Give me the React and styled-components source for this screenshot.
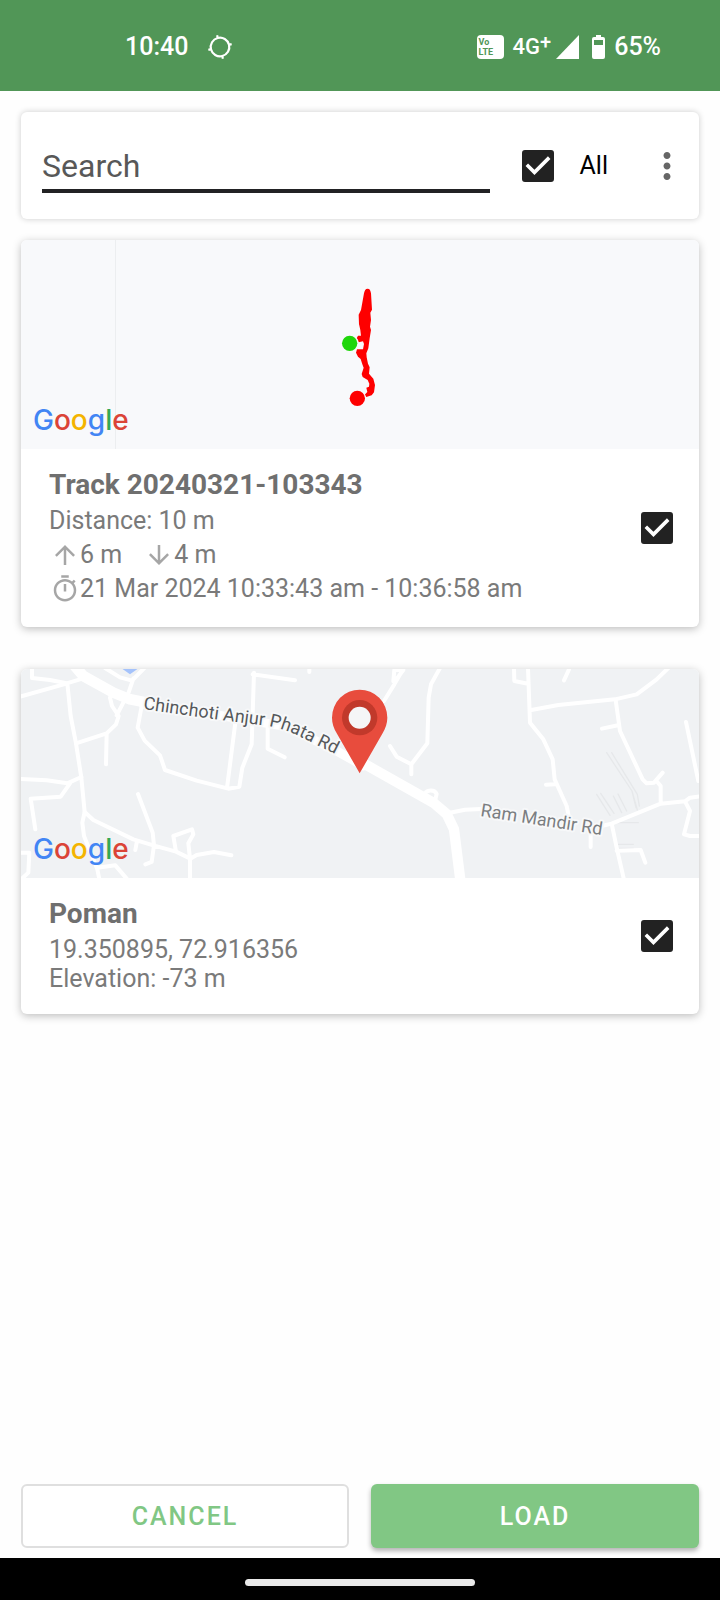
import React, { useState } from "react";
import styled, { createGlobalStyle } from "styled-components";

const GlobalStyle = createGlobalStyle`
  *, *::before, *::after { box-sizing: border-box; }
  body { margin: 0; background: #fefefe; font-family: Roboto, "Liberation Sans", sans-serif; }
`;

const Page = styled.div`
  min-height: 100vh;
  display: flex;
  flex-direction: column;
`;

const StatusBar = styled.header`
  height: 91px;
  padding: 2px 59px 0 125px;
  background: #519657;
  color: #fff;
  display: flex;
  align-items: center;
  justify-content: space-between;
  font-size: 25px;
  font-weight: 500;
  line-height: 30px;
`;

const StatusGroup = styled.div`
  display: flex;
  align-items: center;
  gap: ${(p) => p.$gap}px;
`;

const VolteBadge = styled.span`
  width: 27px;
  height: 24px;
  padding: 2px;
  border-radius: 4px;
  background: #fff;
  color: #519657;
  font-size: 9px;
  font-weight: 700;
  line-height: 10px;
`;

const Network = styled.span`
  display: flex;
  align-items: flex-start;
  font-size: 22px;
`;

const Plus = styled.span`
  font-size: 20px;
  line-height: 20px;
`;

const Content = styled.main`
  flex: 1;
  padding: 21px;
  display: flex;
  flex-direction: column;
  gap: 21px;
`;

const SearchCard = styled.form`
  height: 107px;
  padding: 0 11px 0 21px;
  display: flex;
  align-items: center;
  background: #fff;
  border-radius: 6px;
  box-shadow: 0 0 6px rgba(0, 0, 0, 0.2);
`;

const SearchInput = styled.input`
  flex: 1;
  min-width: 0;
  margin-right: 32px;
  padding: 9px 0 4px;
  height: 55px;
  border: 0;
  border-bottom: 4px solid #222224;
  outline: none;
  background: transparent;
  color: #222;
  font-family: inherit;
  font-size: 32px;
  line-height: 38px;
  &::placeholder { color: #585858; opacity: 1; }
`;

const AllLabel = styled.label`
  display: flex;
  align-items: center;
  gap: 26px;
  margin-right: 38px;
  color: #000;
  font-size: 25px;
  line-height: 30px;
`;

const MenuButton = styled.button`
  width: 42px;
  height: 42px;
  padding: 0;
  border: 0;
  background: transparent;
  color: #666;
  svg { display: block; }
`;

const CheckWrap = styled.span`
  display: grid;
  flex: none;
  width: 32px;
  height: 32px;
  svg { grid-area: 1 / 1; pointer-events: none; }
`;

const CheckInput = styled.input`
  grid-area: 1 / 1;
  appearance: none;
  width: 32px;
  height: 32px;
  margin: 0;
  border: 3px solid #222;
  border-radius: 3px;
  &:checked { background: #222; }
`;

const Cards = styled.div`
  display: flex;
  flex-direction: column;
  gap: 42px;
`;

const Card = styled.article`
  background: #fff;
  border-radius: 6px;
  box-shadow: 0 2px 8px rgba(0, 0, 0, 0.26);
`;

const MapBox = styled.div`
  position: relative;
  height: 209px;
  overflow: hidden;
  border-radius: 6px 6px 0 0;
  background: ${(p) => p.$fill};
  svg { display: block; width: 100%; height: 100%; }
`;

const Logo = styled.span`
  position: absolute;
  left: 12px;
  bottom: 10px;
  font-family: Inter, sans-serif;
  font-size: 28px;
  font-weight: 500;
  line-height: 38px;
`;

const Letter = styled.span`
  color: ${(p) => p.$color};
`;

const CardBody = styled.div`
  display: flex;
  align-items: center;
  justify-content: space-between;
  padding: 0 26px 21px 28px;
`;

const Info = styled.div`
  padding-top: 18px;
  color: #7a7a7a;
  font-size: 25px;
`;

const Title = styled.h2`
  margin: 0 0 3px;
  color: #6f6f6f;
  font-size: 28px;
  font-weight: 700;
  line-height: 36px;
`;

const Line = styled.div`
  line-height: 29px;
`;

const IconRows = styled.div`
  padding: 3px 0 0 1px;
`;

const IconRow = styled.div`
  display: flex;
  gap: 22px;
  line-height: 34px;
`;

const Stat = styled.span`
  display: flex;
  align-items: center;
  svg { color: #a6a6a6; }
`;

const Actions = styled.footer`
  display: grid;
  grid-template-columns: 1fr 1fr;
  gap: 22px;
  padding: 0 21px 10px;
`;

const ActionButton = styled.button`
  height: 64px;
  padding: 0;
  border: ${(p) => (p.$primary ? "0" : "2px solid #dfdfdf")};
  border-radius: 6px;
  background: ${(p) => (p.$primary ? "#81c784" : "#fff")};
  color: ${(p) => (p.$primary ? "#fff" : "#81c784")};
  box-shadow: ${(p) => (p.$primary ? "0 3px 5px rgba(0, 0, 0, 0.3)" : "none")};
  font-family: inherit;
  font-size: 25px;
  font-weight: 500;
  letter-spacing: 2px;
`;

const NavBar = styled.div`
  height: 42px;
  padding-top: 7px;
  background: #000;
  display: flex;
  align-items: center;
  justify-content: center;
`;

const NavPill = styled.span`
  width: 32%;
  height: 7px;
  border-radius: 4px;
  background: #e9e9e9;
`;

const Glyph = ({ size, d }) => (
  <svg width={size} height={size} viewBox="0 0 24 24" fill="currentColor" aria-hidden="true">
    <path d={d} />
  </svg>
);

const UP = "M4 12l1.41 1.41L11 7.83V20h2V7.83l5.58 5.59L20 12l-8-8-8 8z";
const DOWN = "M20 12l-1.41-1.41L13 16.17V4h-2v12.17l-5.58-5.59L4 12l8 8 8-8z";
const TIMER =
  "M15 1H9v2h6V1zm-4 13h2V8h-2v6zm8.03-6.61l1.42-1.42c-.43-.51-.9-.99-1.41-1.41l-1.42 1.42C16.07 4.74 14.12 4 12 4c-4.97 0-9 4.03-9 9s4.02 9 9 9 9-4.03 9-9c0-2.12-.74-4.07-1.97-5.61zM12 20c-3.87 0-7-3.13-7-7s3.13-7 7-7 7 3.13 7 7-3.13 7-7 7z";
const MORE =
  "M12 8c1.1 0 2-.9 2-2s-.9-2-2-2-2 .9-2 2 .9 2 2 2zm0 2c-1.1 0-2 .9-2 2s.9 2 2 2 2-.9 2-2-.9-2-2-2zm0 6c-1.1 0-2 .9-2 2s.9 2 2 2 2-.9 2-2-.9-2-2-2z";

function Check({ checked, onChange, label }) {
  return (
    <CheckWrap>
      <CheckInput
        type="checkbox"
        checked={checked}
        onChange={(e) => onChange(e.target.checked)}
        aria-label={label}
      />
      {checked && (
        <svg width="32" height="32" viewBox="3 3 18 18" fill="#fff" aria-hidden="true">
          <path d="M10 17l-5-5 1.41-1.41L10 14.17l7.59-7.59L19 8l-9 9z" />
        </svg>
      )}
    </CheckWrap>
  );
}

const GoogleLogo = () => (
  <Logo>
    <Letter $color="#4285f4">G</Letter>
    <Letter $color="#db4437">o</Letter>
    <Letter $color="#f4b400">o</Letter>
    <Letter $color="#4285f4">g</Letter>
    <Letter $color="#34a853">l</Letter>
    <Letter $color="#db4437">e</Letter>
  </Logo>
);

const TrackMap = () => (
  <svg viewBox="0 0 678 209" preserveAspectRatio="xMidYMid slice" aria-hidden="true">
    <path d="M94.500 0V209" stroke="#eceef0" strokeWidth="1" />
    <g transform="scale(0.33333) translate(897 90)">
      <path
        d="M143 56C136 56 134 61 132 70L123 120L116 134L117 162L121 180L123 197L114 197L110 205L116 217L129 214L132 222L129 238L111 238L108 248L114 260L122 267L127 283L131 293L125 312L128 321L143 330L148 341L147 350L139 353L142 366L134 374L139 381L155 376L162 367L165 345L160 326L147 311L149 292L144 281L140 262L139 250L145 235L149 205L153 180L150 170L153 150L151 128L156 119L153 70C151 60 149 56 143 56Z"
        fill="#fe0000"
      />
      <circle cx="89" cy="220" r="27" fill="#f8f9fb" />
      <circle cx="89" cy="220" r="23" fill="#1fd60b" />
      <circle cx="112" cy="385" r="26" fill="#f8f9fb" />
      <circle cx="112" cy="385" r="23" fill="#fe0000" />
    </g>
  </svg>
);

const PlaceMap = () => (
  <svg viewBox="0 0 678 209" preserveAspectRatio="xMidYMid slice" aria-hidden="true">
    <defs>
      <path id="chinchoti" d="M122 40L199 51L246 57C262 59 276 66 290 73L330 93" />
      <path id="mandir" d="M459 147L600 169" />
    </defs>
    <g fill="none" stroke="#fff" strokeLinejoin="round" strokeLinecap="round">
      <g transform="scale(0.33333) translate(-33 -39)" strokeWidth="12">
        <path d="M325 30L360 55L395 30Z" fill="#a5c3fb" stroke="none" />
        <path d="M66 30V66L120 72L170 82L210 70M30 122L172 82L182 180L198 262L214 365L224 468L217 500L222 540L262 640L270 680" />
        <path d="M285 36L330 64L366 74L403 36M370 68L355 112M300 125L306 150L326 180L318 205L290 232L198 262M345 130L320 178M290 232L288 325" />
        <path d="M395 150L383 215L404 254L450 298L465 342L560 374L655 398L688 392L697 335L725 265L732 50M676 200L651 396M728 55L855 73M773 215V278L824 304M898 36V48" />
        <path d="M30 369L110 373L172 382L214 363M180 382L152 422L62 428L76 520M224 468L250 492L370 550L430 568L498 587L541 608L560 597L612 588L664 598M384 414L428 530L432 568L425 618L406 625M380 560L376 582M498 587L490 540L546 520L550 535L535 562L540 608V680M262 635L316 628L350 668M30 590H58L55 650L36 668" />
        <path d="M190 25L220 60L310 110L360 130L420 142" strokeWidth="32" />
        <path d="M400 145L640 180L830 212L980 285L1060 330" strokeWidth="27" />
      </g>
      <g transform="scale(0.33333) translate(987 -39)" strokeWidth="12">
        <g stroke="#e6e8ea" strokeWidth="4">
          <path d="M770 290L846 405L858 455M785 290L862 415L868 450M740 415L780 478M752 412L792 472M790 420L815 470M804 414L830 465M805 500H865M803 565H850M803 577H850M846 405L862 462" />
        </g>
        <path d="M102 135L133 85L165 30M130 76L133 42H160L136 74M270 36L243 85L236 125L232 262L184 325L140 302L120 270M184 325V355" />
        <path d="M534 36L540 200L580 250L608 310L614 370L650 450L657 485M492 36L493 75L534 83M540 163L625 147L795 130L860 115L920 70L955 36M657 40L642 73M588 386L614 385" />
        <path d="M797 132L810 225L878 370L890 382L912 380L938 350M804 208L756 218M922 378L932 390V436M1008 198L1045 375M1070 418L1020 425L1005 436L932 443L785 503L755 510M785 503L800 575L824 680M800 584L872 582L886 620M1005 436L1020 465L1002 535L1020 540H1060M722 510V573" />
        <path d="M300 470L345 461L410 458M224 420C220 402 252 398 260 414L255 434" />
        <path d="M40 322L250 440L290 474L312 520L332 680" strokeWidth="31" />
      </g>
    </g>
    <g
      fontFamily="Roboto, sans-serif"
      fontSize="18"
      stroke="#f7f8f9"
      strokeWidth="4"
      strokeLinejoin="round"
      paintOrder="stroke"
    >
      <text fill="#55585b">
        <textPath href="#chinchoti">Chinchoti Anjur Phata Rd</textPath>
      </text>
      <text fill="#7b7e81">
        <textPath href="#mandir">Ram Mandir Rd</textPath>
      </text>
    </g>
    <g transform="scale(0.33333) translate(-33 -39)">
      <path d="M1049 352L981 233C971 216 966 202 966 185A83 84 0 0 1 1132 185C1132 202 1127 216 1117 233Z" fill="#e84c3d" />
      <circle cx="1049" cy="185" r="53" fill="#c1392b" />
      <circle cx="1049" cy="185" r="33" fill="#f5f6f7" />
    </g>
  </svg>
);

export default function App() {
  const [track, setTrack] = useState(true);
  const [place, setPlace] = useState(true);
  const setAll = (value) => {
    setTrack(value);
    setPlace(value);
  };

  return (
    <Page>
      <GlobalStyle />
      <StatusBar>
        <StatusGroup $gap={20}>
          <span>10:40</span>
          <svg width="24" height="24" viewBox="0 0 24 24" fill="none" stroke="#fff" strokeWidth="2.200" aria-hidden="true">
            <g transform="rotate(-14 12 12)">
              <circle cx="12" cy="12" r="9.300" />
              <path d="M12 0V3M12 21V24M0 12H3M21 12H24" />
            </g>
          </svg>
        </StatusGroup>
        <StatusGroup $gap={9}>
          <VolteBadge>
            Vo
            <br />
            LTE
          </VolteBadge>
          <StatusGroup $gap={5}>
            <Network>
              4G<Plus>+</Plus>
            </Network>
            <svg width="23" height="24" viewBox="0 0 23 24" fill="#fff" aria-hidden="true">
              <path d="M0 24L23 0V24Z" />
            </svg>
          </StatusGroup>
          <svg width="17" height="24" viewBox="-4 0 17 24" fill="#fff" aria-hidden="true">
            <path fillRule="evenodd" d="M4 0H9V2H11Q13 2 13 4V22Q13 24 11 24H2Q0 24 0 22V4Q0 2 2 2H4ZM2 5V10H11V5Z" />
          </svg>
          <span>65%</span>
        </StatusGroup>
      </StatusBar>

      <Content>
        <SearchCard onSubmit={(e) => e.preventDefault()}>
          <SearchInput type="text" placeholder="Search" aria-label="Search" />
          <AllLabel>
            <Check checked={track && place} onChange={setAll} label="All" />
            All
          </AllLabel>
          <MenuButton type="button" aria-label="More options">
            <Glyph size={42} d={MORE} />
          </MenuButton>
        </SearchCard>

        <Cards>
          <Card>
            <MapBox $fill="#f8f9fb">
              <TrackMap />
              <GoogleLogo />
            </MapBox>
            <CardBody>
              <Info>
                <Title>Track 20240321-103343</Title>
                <Line>Distance: 10 m</Line>
                <IconRows>
                  <IconRow>
                    <Stat>
                      <Glyph size={30} d={UP} />6 m
                    </Stat>
                    <Stat>
                      <Glyph size={30} d={DOWN} />4 m
                    </Stat>
                  </IconRow>
                  <IconRow>
                    <Stat>
                      <Glyph size={30} d={TIMER} />
                      21 Mar 2024 10:33:43 am - 10:36:58 am
                    </Stat>
                  </IconRow>
                </IconRows>
              </Info>
              <Check checked={track} onChange={setTrack} label="Select Track 20240321-103343" />
            </CardBody>
          </Card>

          <Card>
            <MapBox $fill="#f0f2f4">
              <PlaceMap />
              <GoogleLogo />
            </MapBox>
            <CardBody>
              <Info>
                <Title>Poman</Title>
                <Line>19.350895, 72.916356</Line>
                <Line>Elevation: -73 m</Line>
              </Info>
              <Check checked={place} onChange={setPlace} label="Select Poman" />
            </CardBody>
          </Card>
        </Cards>
      </Content>

      <Actions>
        <ActionButton type="button">CANCEL</ActionButton>
        <ActionButton type="button" $primary>
          LOAD
        </ActionButton>
      </Actions>
      <NavBar>
        <NavPill />
      </NavBar>
    </Page>
  );
}
